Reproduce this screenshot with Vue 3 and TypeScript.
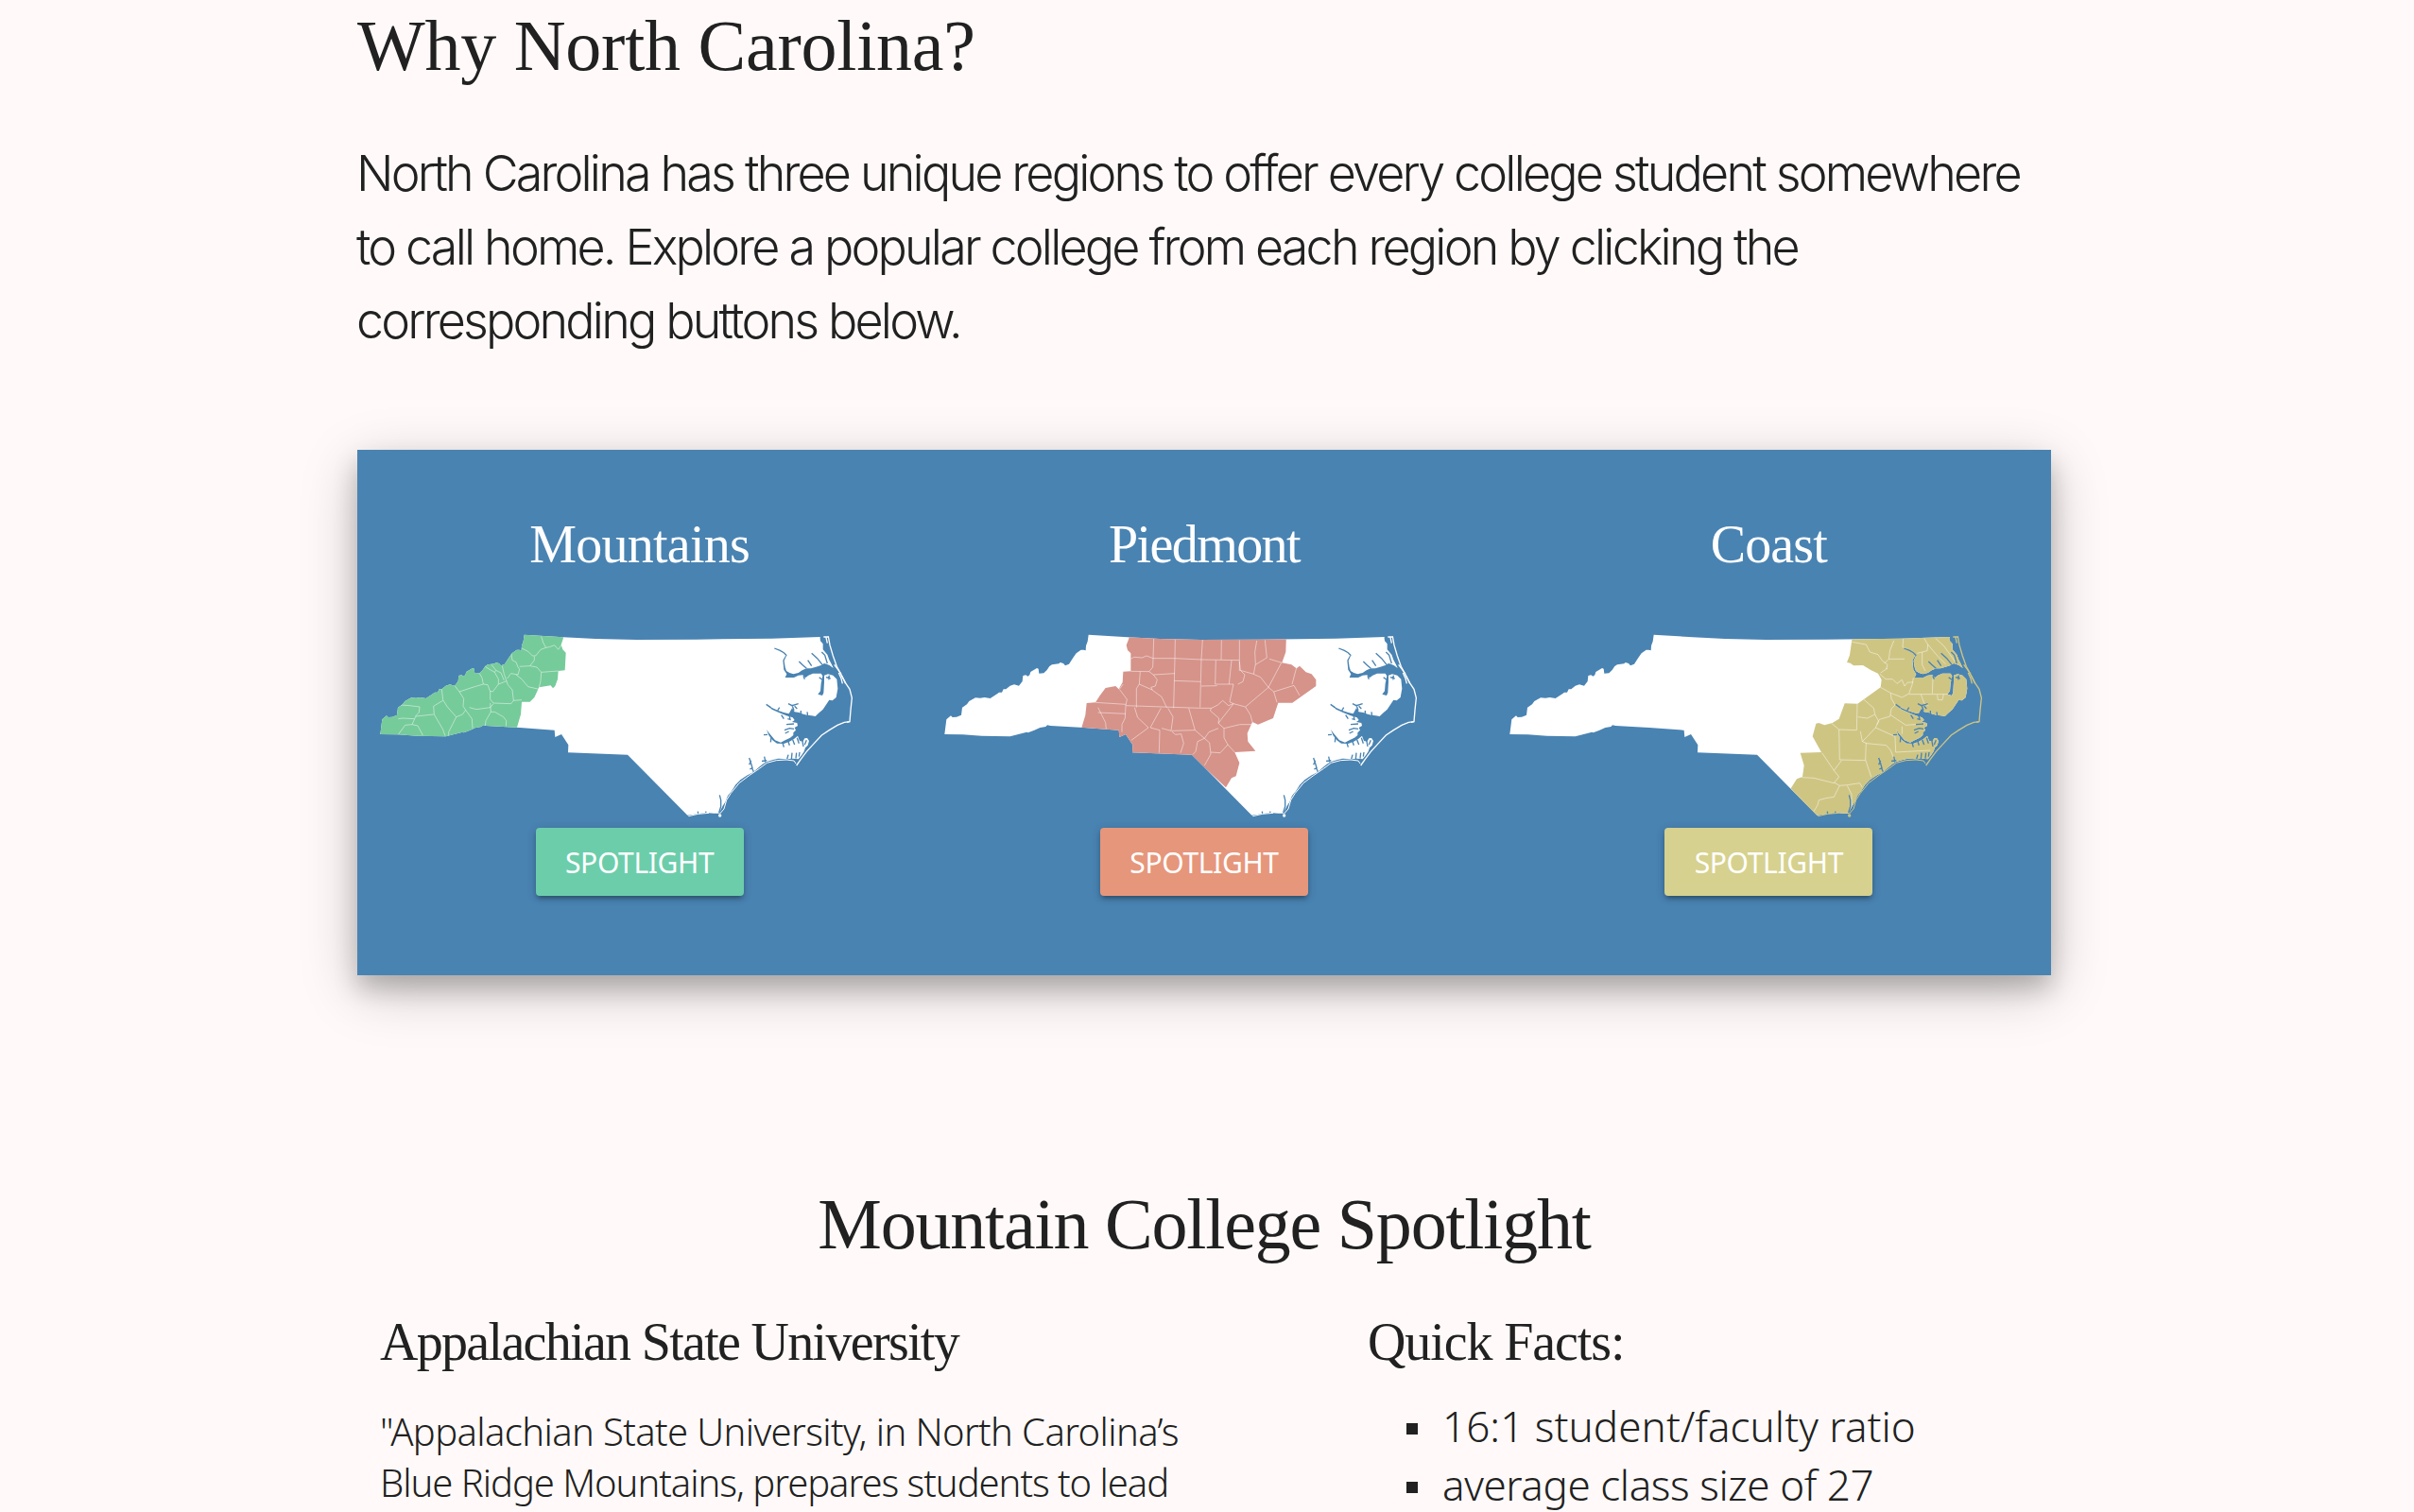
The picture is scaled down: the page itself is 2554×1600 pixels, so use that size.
<script setup lang="ts">
interface Region {
  id: string
  name: string
  tracking: string
  fill: string
  button: string
  offset: number
  area: string
  counties: string
}

// Shared state outline, drawn once per region card
const mainland =
  'M37,381 L43,334 L57,322 L62,327 L75,326 L90,320 L93,296 L108,286 L115,276 L135,265 L150,266 L164,264 L182,267 L205,252 L210,248 L219,248 L224,238 L232,238 L245,227 L258,223 L273,227 L284,213 L286,195 L295,193 L301,197 L307,193 L310,183 L330,171 L335,173 L337,188 L352,187 L362,177 L370,165 L378,160 L400,157 L404,153 L414,156 L420,163 L432,158 L445,138 L455,124 L470,113 L478,113 L485,115 L486,100 L491,86 L494,65 L618,73 L720,78 L850,81 L1040,80 L1280,77 L1433,72 ' +
  'L1434,84 L1442,94 L1442,112 L1456,128 L1462,145 L1470,160 L1476,172 L1464,163 L1454,158 L1446,156 L1436,162 L1420,167 L1404,172 L1390,172 L1376,178 L1364,186 L1348,190 L1336,186 L1326,180 L1322,168 L1319,148 L1326,132 L1323,132 L1315,146 L1318,176 L1327,190 L1322,201 L1350,201 L1364,194 L1378,193 L1386,202 L1396,194 L1410,188 L1436,188 L1441,196 L1436,220 L1434,244 L1426,254 L1440,258 L1444,250 L1446,215 L1446,194 L1458,190 L1474,194 L1486,206 L1489,236 L1484,264 L1472,274 L1462,272 L1450,290 L1442,302 L1428,314 L1418,324 L1406,322 L1392,320 L1380,317 L1366,312 L1352,310 L1344,298 L1334,316 L1318,312 L1300,306 L1282,298 L1262,286 L1280,302 L1302,312 L1326,322 L1346,328 L1352,336 L1344,342 L1360,345 L1362,354 L1352,360 L1356,368 L1348,376 L1348,384 L1338,392 L1322,400 L1308,407 L1290,400 L1280,388 L1270,376 L1263,366 L1270,384 L1282,400 L1296,410 L1318,411 L1336,404 L1350,396 L1362,386 L1368,402 L1378,404 L1384,394 L1392,393 L1398,402 L1394,416 L1386,424 L1382,436 L1374,448 L1364,460 L1346,458 L1328,460 L1300,458 L1284,462 L1264,468 L1250,476 L1234,490 L1220,502 L1200,512 L1180,526 L1164,542 L1152,562 L1140,576 L1132,596 L1124,608 L1112,632 L1096,632 L1070,630 L1044,634 L1012,638 ' +
  'L822,446 L633,439 L634,415 L612,381 L592,390 L590,368 L480,360 L373,354 L363,352 L358,357 L340,360 L322,368 L302,376 L298,374 L245,388 L155,386 L95,382 Z'

const barrier =
  'M1459,70 L1464,98 L1474,132 L1486,166 L1500,192 L1516,222 L1527,238 L1534,266 L1530,304 L1527,341 L1510,343 L1488,352 L1462,368 L1438,384 L1414,410 L1390,436 L1372,460 L1358,480'
const banks =
  'M1444,72 L1460,72 M1452,74 L1456,92 M1478,160 L1490,176 L1500,190 M1492,186 L1500,204 L1504,220 M1500,192 L1514,220 M1518,343 L1526,341'
const lowerBarrier =
  'M1356,474 L1350,465 L1326,462 L1294,464 L1264,472 L1240,490 L1208,512 L1176,536 L1150,568 L1136,590 L1128,618 L1114,634 M1015,641 L1046,634 L1080,631'
const inlets =
  'M1288,108 L1306,115 L1318,122 L1327,131 M1434,76 L1444,90 L1454,96 L1458,122 L1470,150 L1478,172 M1436,86 L1450,84 M1366,150 L1376,160 L1390,172 M1394,146 L1406,164 M1406,124 L1424,140 L1440,160 M1438,120 L1448,130 L1456,156 M1262,286 L1276,296 M1298,306 L1304,296 M1334,316 L1338,334 L1330,332 M1332,284 L1344,290 L1364,284 M1344,288 L1350,306 M1352,292 L1360,300 M1372,306 L1372,318 M1392,310 L1394,324 M1310,320 L1318,332 M1320,368 L1336,362 L1350,364 M1326,350 L1350,348 M1322,378 L1334,372 M1254,383 L1266,382 M1278,390 L1276,406 M1314,408 L1318,422 M1332,404 L1336,416 M1346,398 L1352,414 M1360,392 L1366,410 M1376,398 L1380,420 M1390,400 L1384,414 M1342,460 L1344,440 M1328,460 L1332,446 M1356,458 L1358,440 M1366,452 L1368,438 M1208,456 L1214,474 L1218,488 L1210,492 M1214,464 L1208,478 M1222,500 L1216,486 M1256,452 L1260,470 M1248,466 L1264,464 M1114,574 L1118,590 L1118,610 L1112,630 M1045,626 L1046,634 M1070,626 L1071,632 M1462,194 L1460,208 M1452,200 L1466,204 M1430,200 L1440,208 M1380,196 L1384,206'

const regions: Region[] = [
  {
    id: 'mountains',
    name: 'Mountains',
    tracking: '-0.75px',
    fill: '#76cb9a',
    button: '#6ccdab',
    offset: 0,
    area: 'M20,60 L618,60 L618,76 L611,97 L616,112 L626,122 L623,178 L602,180 L600,206 L592,228 L585,235 L578,226 L541,232 L526,264 L512,278 L486,278 L483,318 L470,362 L470,400 L20,400 Z',
    counties:
      'M548,70 L554,90 L563,106 L574,104 L590,98 L602,112 L612,97 M486,108 L506,118 L520,132 L530,132 L546,112 L563,106 M526,134 L526,146 L512,164 L479,166 M512,164 L534,168 L548,184 L602,180 M548,184 L546,212 L541,232 M453,126 L456,146 L468,152 L474,168 L479,174 L474,192 L452,188 L440,204 M424,164 L430,190 L438,212 M468,192 L486,206 L506,230 L541,238 M370,166 L382,174 L400,184 L404,178 L390,160 M400,184 L412,206 L412,222 L394,246 L386,244 M404,178 L420,186 L430,210 M412,222 L438,212 L442,224 L456,240 L460,274 L486,272 M352,188 L360,202 L364,222 L330,232 L288,246 L274,228 M364,222 L378,224 L386,246 L386,270 L396,282 L452,284 L460,274 M386,282 L388,310 L400,310 L428,326 L437,338 L436,356 M396,284 L386,296 L342,302 L320,296 M388,310 L372,338 L370,354 M288,246 L302,268 L300,292 L308,304 L328,332 L330,362 M308,304 L298,318 L278,326 L266,350 L254,374 L254,386 M232,238 L236,272 L250,294 L278,326 M236,274 L222,282 L206,292 L208,318 L222,342 L236,366 L243,386 M206,318 L150,324 L146,332 L108,330 L94,332 M102,288 L130,290 L162,294 L160,312 L148,324 M146,332 L138,350 L116,352 L94,382 M138,350 L156,354 L172,384',
  },
  {
    id: 'piedmont',
    name: 'Piedmont',
    tracking: '-1.6px',
    fill: '#d6938a',
    button: '#e6967b',
    offset: 428,
    area: 'M195,60 L194,77 L186,98 L190,114 L200,124 L200,181 L176,182 L174,216 L162,238 L152,228 L120,234 L102,258 L88,280 L60,282 L56,320 L44,360 L44,380 L150,400 L220,470 L400,455 L502,550 L520,520 L534,514 L545,472 L530,438 L596,434 L572,404 L570,378 L586,342 L604,350 L652,330 L668,281 L713,281 L788,228 L788,208 L774,190 L756,184 L736,164 L726,172 L710,160 L680,154 L692,120 L694,60 Z',
    counties:
      'M273,78 L271,140 M341,80 L340,140 L336,298 M428,81 L424,142 L420,296 M488,82 L487,144 M545,82 L545,180 M600,84 L594,120 L596,158 L590,190 M626,82 L632,138 L596,160 M200,142 L210,136 L236,138 L250,132 L271,140 L340,140 L424,144 L545,146 M271,140 L270,168 L258,182 L272,192 L340,188 M200,181 L258,182 M230,182 L227,222 L268,240 M272,192 L284,208 L278,228 L264,232 L270,242 L298,262 L314,296 M227,222 L218,236 L218,296 M176,222 L164,238 L188,270 L184,290 L420,298 L456,298 M338,211 L422,214 M424,228 L474,227 M470,146 L468,222 L526,222 M520,146 L512,222 M545,150 L548,178 L562,192 L556,214 L540,222 M526,222 L514,278 L526,284 M548,178 L590,190 L612,200 L637,232 L564,294 L526,284 L478,346 M678,154 L637,232 L654,246 L718,226 L736,258 M727,166 L712,222 M640,142 L680,154 M654,246 L664,280 M564,294 L580,320 L586,342 M526,284 L510,290 L492,274 L476,288 L456,298 L452,306 L480,330 L478,346 L496,362 L546,350 L586,350 M384,298 L404,368 L434,394 L448,374 L478,362 M496,362 L496,392 L508,414 L484,440 L454,438 M508,414 L530,438 M88,280 L184,286 M96,312 L184,316 M96,296 L120,344 L122,364 M184,290 L182,330 L172,350 L172,374 M212,296 L222,328 L256,360 L202,400 M296,298 L262,360 L292,368 L290,440 M318,298 L334,326 L328,370 L298,362 M330,370 L404,368 M330,372 L342,382 L360,380 L368,410 L358,440 M434,394 L412,404 L406,436 L396,446 M434,394 L450,408 L454,444 L434,480',
  },
  {
    id: 'coast',
    name: 'Coast',
    tracking: '-0.9px',
    fill: '#cfc583',
    button: '#d6d18e',
    offset: 796,
    area: 'M327,60 L327,81 L320,130 L311,153 L322,155 L332,163 L362,162 L388,178 L410,188 L421,208 L418,232 L345,284 L304,283 L286,332 L265,345 L240,352 L222,345 L213,347 L202,388 L230,438 L163,440 L175,480 L170,516 L152,523 L133,553 L212,650 L760,650 L760,60 Z',
    counties:
      'M327,88 L372,96 L384,120 L410,128 L424,148 L440,160 L436,174 L418,186 M460,84 L448,114 L444,142 L494,142 M444,142 L430,156 M436,174 L440,172 M416,190 L434,206 L456,206 L470,220 L486,208 L494,228 L504,216 L522,216 M522,202 L518,224 L508,252 L486,264 L450,250 L418,232 M508,254 L640,254 M584,204 L582,252 M598,256 L600,272 L614,272 L618,254 M490,78 L488,104 L504,112 L526,126 M556,76 L568,96 L566,116 L534,124 M568,96 L600,134 L624,158 M592,76 L620,102 L654,150 M550,120 L550,160 L560,180 M450,250 L452,268 L464,288 L452,300 L448,324 L414,334 L406,350 M364,270 L396,298 L400,318 L376,330 L346,326 M344,284 L342,368 L286,366 L262,346 M400,318 L412,340 L402,360 L376,388 L360,404 L354,372 M402,360 L464,388 L466,438 L576,432 M450,320 L498,352 L556,348 M486,356 L486,380 M546,254 L556,282 L570,290 M360,404 L374,410 L436,416 L450,432 L456,448 L466,470 M372,408 L370,462 L388,516 M286,366 L288,462 L370,464 M294,464 L270,496 L232,440 M270,496 L286,516 L270,536 L206,520 L168,518 M270,534 L288,544 L312,542 L352,536 L360,550 M288,544 L270,580 L244,584 L222,590 L218,606 L206,626 M312,544 L326,572 L326,620',
  },
]

const facts = [
  { text: '16:1 student/faculty ratio', tracking: '0.06px' },
  { text: 'average class size of 27', tracking: '-0.42px' },
]
</script>

<template>
  <main class="page">
    <h2 class="title why">Why North Carolina?</h2>
    <p class="intro">
      North Carolina has three unique regions to offer every college student somewhere<br />
      to call home. Explore a popular college from each region by clicking the<br />
      corresponding buttons below.
    </p>

    <section class="panel">
      <article v-for="r in regions" :key="r.id" class="region">
        <h3 class="region-name" :style="{ letterSpacing: r.tracking }">{{ r.name }}</h3>
        <svg class="map" viewBox="36 60 1506 600" aria-hidden="true">
          <defs>
            <clipPath :id="'land-' + r.id"><path :d="mainland" /></clipPath>
          </defs>
          <path :d="mainland" fill="#fff" />
          <g :clip-path="`url(#land-${r.id})`">
            <g :transform="`translate(${r.offset} 0)`">
              <path :d="r.area" :fill="r.fill" />
              <path :d="r.counties" class="county" />
            </g>
          </g>
          <path :d="inlets" class="inlet" />
          <g class="barrier" :stroke="r.id === 'coast' ? r.fill : '#fff'">
            <path :d="barrier" />
            <path :d="banks" />
            <path :d="lowerBarrier" class="thin" />
            <circle cx="1115" cy="639" r="3" />
          </g>
        </svg>
        <button class="spotlight" :style="{ backgroundColor: r.button }">SPOTLIGHT</button>
      </article>
    </section>

    <h2 class="title centered">Mountain College Spotlight</h2>
    <div class="columns">
      <section class="about">
        <h3 class="sub university">Appalachian State University</h3>
        <p class="quote">
          <span class="line-one">"Appalachian State University, in North Carolina’s</span><br />
          <span class="line-two">Blue Ridge Mountains, prepares students to lead</span>
        </p>
      </section>
      <section class="quick">
        <h3 class="sub quick-title">Quick Facts:</h3>
        <ul class="facts">
          <li v-for="f in facts" :key="f.text">
            <span :style="{ letterSpacing: f.tracking }">{{ f.text }}</span>
          </li>
        </ul>
      </section>
    </div>
  </main>
</template>

<style>
body {
  background: #fffaf9;
}
</style>

<style scoped>
.page {
  box-sizing: border-box;
  width: 2554px;
  height: 1600px;
  overflow: hidden;
  padding: 0 384px 0 378px;
  background: #fffaf9;
  color: #212121;
  font-family: 'Noto Sans', 'Open Sans', sans-serif;
}
h2,
h3,
p,
ul {
  margin: 0;
  padding: 0;
  font-weight: 400;
  white-space: nowrap;
}
.title {
  font-family: 'Liberation Serif', serif;
  font-size: 76px;
  line-height: 96px;
}
.why {
  letter-spacing: -0.25px;
}
.intro {
  margin-top: 49px;
  margin-left: -1px;
  font-family: Inter, sans-serif;
  font-weight: 350;
  font-size: 52px;
  line-height: 78px;
  letter-spacing: -2.81px;
}
.panel {
  display: grid;
  grid-template-columns: repeat(3, 1fr);
  box-sizing: border-box;
  height: 556px;
  margin-top: 97px;
  padding-top: 64px;
  background: #4983b2;
  box-shadow: 0 14px 24px rgba(0, 0, 0, 0.2), 0 16px 56px rgba(0, 0, 0, 0.22);
}
.region {
  display: flex;
  flex-direction: column;
  align-items: center;
  padding: 0 24px;
}
.region-name {
  font-family: 'Liberation Serif', serif;
  font-size: 56px;
  line-height: 72px;
  color: #fff;
}
.map {
  align-self: flex-start;
  width: 502px;
  height: 200px;
  margin-top: 58px;
}
.county {
  fill: none;
  stroke: #fff;
  stroke-opacity: 0.6;
  stroke-width: 2.4;
}
.inlet {
  fill: none;
  stroke: #4983b2;
  stroke-width: 4;
}
.barrier {
  fill: none;
  stroke-width: 4;
}
.barrier .thin {
  stroke-width: 3;
}
.spotlight {
  width: 220px;
  height: 72px;
  margin-top: 6px;
  padding: 0;
  border: 0;
  border-radius: 4px;
  color: #fff;
  font-family: 'Noto Sans', sans-serif;
  font-size: 30px;
  line-height: 73px;
  letter-spacing: -0.35px;
  box-shadow: 0 4px 4px rgba(0, 0, 0, 0.14), 0 6px 2px -4px rgba(0, 0, 0, 0.12), 0 2px 10px rgba(0, 0, 0, 0.2);
}
.centered {
  margin-top: 215px;
  text-align: center;
  letter-spacing: -1.2px;
}
.columns {
  display: flex;
  margin-top: 41px;
  padding-left: 24px;
}
.about {
  width: 1045px;
}
.sub {
  font-family: 'Liberation Serif', serif;
  font-size: 56px;
  line-height: 72px;
}
.university {
  letter-spacing: -1.69px;
}
.quick-title {
  letter-spacing: -1.1px;
}
.quote {
  margin-top: 32px;
  font-size: 40px;
  font-weight: 350;
  line-height: 54px;
}
.line-one {
  letter-spacing: -0.62px;
}
.line-two {
  letter-spacing: -1.04px;
}
.facts {
  margin-top: 22px;
  padding-left: 41px;
  list-style: none;
}
.facts li {
  display: flex;
  align-items: center;
  gap: 26px;
  height: 62px;
  font-size: 44px;
  font-weight: 350;
}
.facts li::before {
  content: '';
  width: 12px;
  height: 12px;
  margin-top: 5px;
  background: #212121;
}
</style>
